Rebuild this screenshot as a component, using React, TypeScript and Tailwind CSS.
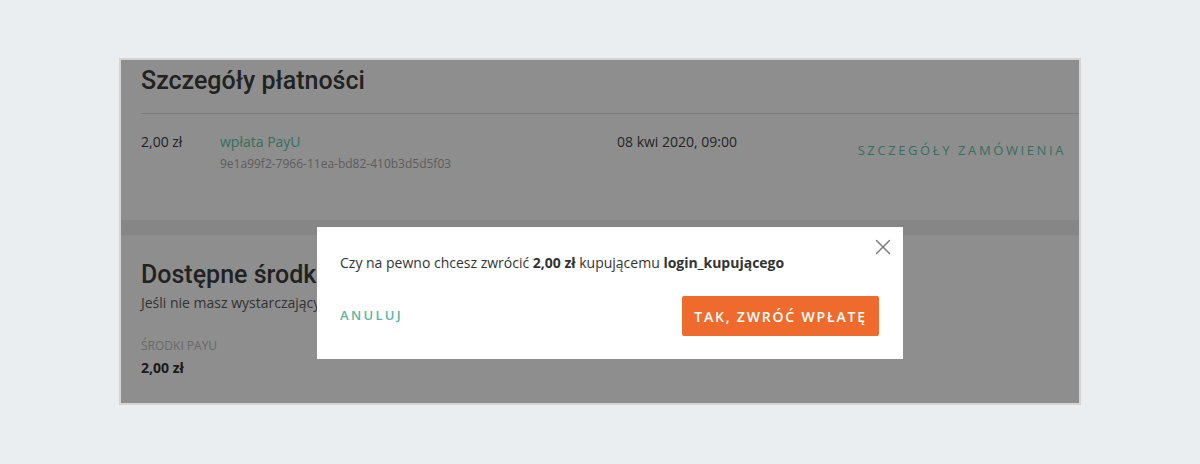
import { X } from "lucide-react";

const body = { fontFamily: '"Open Sans", "Liberation Sans", sans-serif' };
const head = { fontFamily: 'Roboto, "Liberation Sans", sans-serif' };

function PaymentDetails() {
  return (
    <section className="h-[160px] shrink-0 bg-white pl-[20px] pt-[6px]">
      <h2 className="text-[25px] leading-[30px] font-medium text-[#3d3d3d]" style={head}>
        Szczegóły płatności
      </h2>
      <div className="mt-[17px] h-px bg-[#dddddd]" />
      <div className="flex pt-[18px] pr-[13px] text-[14px] leading-[20px]">
        <div className="w-[79px] text-[#3d3d3d]">2,00 zł</div>
        <div className="w-[397px]">
          <div className="text-[#62c9a5]">wpłata PayU</div>
          <div className="mt-[2px] text-[12px] leading-[20px] text-[#a8a8a8]">
            9e1a99f2-7966-11ea-bd82-410b3d5d5f03
          </div>
        </div>
        <div className="text-[#444444]">08 kwi 2020, 09:00</div>
        <a className="ml-auto mt-[8px] text-[13px] tracking-[0.2em] text-[#62c8ae] uppercase" href="#">
          Szczegóły zamówienia
        </a>
      </div>
    </section>
  );
}

function Funds() {
  return (
    <section className="flex-1 bg-white pl-[20px] pt-[25px]">
      <h2 className="text-[25px] leading-[30px] font-medium text-[#3d3d3d]" style={head}>
        Dostępne środki
      </h2>
      <p className="mt-[3px] text-[14px] leading-[20px] text-[#5c5c5c]">
        Jeśli nie masz wystarczających środków, zasil swoje konto
      </p>
      <div className="mt-[24px] text-[12px] leading-[18px] text-[#bdbdbd] uppercase">Środki PayU</div>
      <div className="mt-[3px] text-[14px] leading-[20px] font-bold text-[#333333]">2,00 zł</div>
    </section>
  );
}

function RefundModal() {
  return (
    <div className="absolute left-[196px] top-[167px] w-[586px] h-[132px] bg-white pl-[23px] pr-[24px] pt-[26px]">
      <button className="absolute top-[7px] right-[7px] text-[#7a7a7a]" title="Zamknij">
        <X size={26} strokeWidth={1.3} />
      </button>
      <p className="text-[14px] leading-[20px] text-[#333333]">
        Czy na pewno chcesz zwrócić <b className="font-bold">2,00 zł</b> kupującemu{" "}
        <b className="font-bold">login_kupującego</b>
      </p>
      <div className="mt-[23px] flex items-center justify-between">
        <button className="text-[13px] font-semibold tracking-[0.18em] text-[#5ab6a1]">ANULUJ</button>
        <button className="w-[197px] h-[40px] rounded-[2px] bg-[#ef6b2d] text-[14px] font-semibold tracking-[0.13em] text-white">
          TAK, ZWRÓĆ WPŁATĘ
        </button>
      </div>
    </div>
  );
}

export default function App() {
  return (
    <div className="min-h-screen bg-[#eaeef1] px-[119px] pt-[58px]" style={body}>
      <div className="relative flex h-[347px] flex-col gap-[15px] overflow-hidden border-2 border-[#d4d4d4] bg-[#f1f1f1]">
        <PaymentDetails />
        <Funds />
        <div className="absolute inset-0 bg-black/[0.443]" />
        <RefundModal />
      </div>
    </div>
  );
}
